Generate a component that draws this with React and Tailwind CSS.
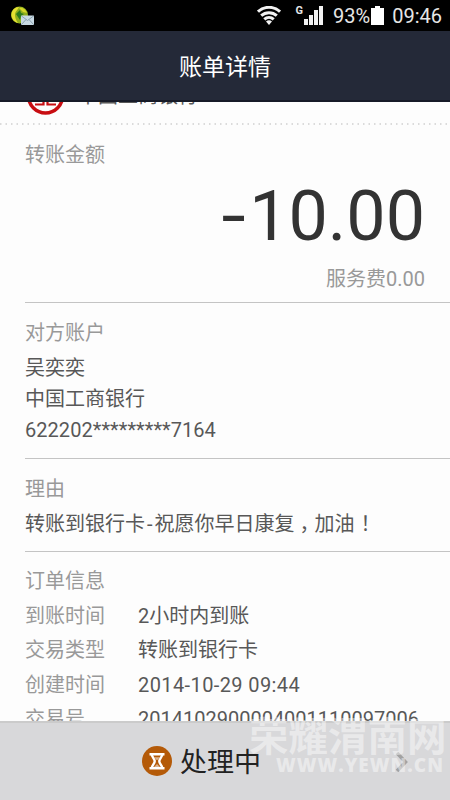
import { Fragment } from 'react';

const pedido = [
  { label: '到账时间', valor: '2小时内到账' },
  { label: '交易类型', valor: '转账到银行卡' },
  { label: '创建时间', valor: '2014-10-29 09:44', espacado: true },
  { label: '交易号', valor: '2014102900004001110097006' },
];

function StatusBar() {
  return (
    <div className="flex h-[31px] shrink-0 items-center bg-black text-[#e6e6e6]">
      {/* Notification: coin + envelope */}
      <svg className="ml-[10px]" width="25" height="22" viewBox="0 0 25 22">
        <circle cx="9.5" cy="10" r="8.5" fill="#8fae1c" />
        <path d="M1.500 9C2 5 5 2 9 2c-1 3-4 4-4 8 0 3 1 5 3 8-4-1-7-5-6.500-9z" fill="#e6e032" />
        <path d="M9 3c4-1 7 2 8 5l-4-1z" fill="#d6d628" />
        <path d="M6 9l4-4 1 3 3 1-3 2-1 4-2-3z" fill="#2c7a1e" />
        <rect x="11" y="10.500" width="13" height="9.500" rx="1" fill="#c8d9e3" />
        <path d="M11.500 11l6 4.500 6-4.500M11.500 19.500l4.500-5M23.500 19.500l-4.500-5" fill="none" stroke="#8ba2b0" strokeWidth="1" />
      </svg>

      {/* Wifi */}
      <svg className="ml-auto" width="24" height="19" viewBox="0 0 24 19" fill="none" stroke="#f2f2f2" strokeWidth="3">
        <path d="M1 5.700a16 16 0 0 1 22 0" />
        <path d="M4.200 9.700a11.500 11.500 0 0 1 15.600 0" />
        <path d="M7.300 13.300a7 7 0 0 1 9.400 0" />
        <path d="M9 15.600a4.500 4.500 0 0 1 6 0L12 19z" fill="#f2f2f2" stroke="none" />
      </svg>
      <span className="ml-[15px] mb-[10px] text-[11px] leading-none font-bold">G</span>
      <svg className="ml-px" width="20" height="19" viewBox="0 0 20 19" fill="#f2f2f2">
        <path d="M0 13h4v6H0zM5 9h4v10H5zM10 4h4v15h-4zM15 0h4v19h-4z" />
      </svg>
      <span className="ml-[9px] text-[20px] leading-none">93%</span>
      <svg className="ml-px" width="13" height="19" viewBox="0 0 13 19" fill="#fff">
        <path d="M4 0h5v2h4v17H0V2h4z" />
      </svg>
      <span className="ml-[8px] mr-[8px] text-[20px] leading-none">09:46</span>
    </div>
  );
}

function Divider() {
  return <div className="h-px shrink-0 bg-[#c4c4c4]" />;
}

export default function App() {
  return (
    <div className="flex h-[800px] w-[450px] flex-col overflow-hidden bg-[#fdfdfd] font-[Roboto,'Noto_Sans_CJK_SC',sans-serif] text-[20px] text-[#585858]">
      <StatusBar />

      <header className="flex h-[71px] shrink-0 items-center justify-center border-b-2 border-[#171b28] bg-[#242938] pt-[5px] text-[23px] text-white">
        账单详情
      </header>

      <main className="flex min-h-0 flex-1 flex-col overflow-hidden">
        {/* Bank row, scrolled under the header */}
        <div className="flex h-[21px] shrink-0 items-end overflow-hidden pl-[26px]">
          <svg className="mb-[8px] shrink-0" width="39" height="38" viewBox="0 0 39 38" fill="none" stroke="#c80d12">
            <circle cx="19.5" cy="19" r="17" strokeWidth="3.500" />
            <path d="M9 9h21M17.500 9v18.500H9M21.500 9v18.500H30M10.500 23.500h7M21.500 23.500h7" strokeWidth="2.200" />
          </svg>
          <span className="mb-[12px] ml-[13px] text-[20px] leading-[30px]">中国工商银行</span>
        </div>
        <svg className="shrink-0" width="450" height="3" viewBox="0 0 450 3">
          <path d="M0 1H450" stroke="#cfcfcf" strokeWidth="1.500" strokeDasharray="1.5 4" />
        </svg>

        <div className="flex flex-col pl-[25px]">
          <section className="flex h-[176px] shrink-0 flex-col pr-[25px]">
            <h2 className="mt-[14px] leading-[30px] text-[#999]">转账金额</h2>
            <div className="mt-[10px] text-right text-[70px] leading-[72px] text-[#333]">
              <span className="mr-[6px] inline-block scale-x-125">-</span>10.00
            </div>
            <div className="mt-[12px] text-right leading-[30px] text-[#999]">服务费0.00</div>
          </section>
          <Divider />

          <section className="h-[155px] shrink-0">
            <h2 className="pt-[15px] leading-[30px] text-[#999]">对方账户</h2>
            <p className="mt-[5px] leading-[31px]">吴奕奕</p>
            <p className="leading-[31px]">中国工商银行</p>
            <p className="leading-[31px] tracking-[0.05px]">622202*********7164</p>
          </section>
          <Divider />

          <section className="h-[92px] shrink-0">
            <h2 className="pt-[15px] leading-[30px] text-[#999]">理由</h2>
            <p className="mt-[5px] leading-[31px]">
              转账到银行卡<span className="mx-[2px]">-</span>祝愿你早日康复<span className="ml-[5px] mr-[-5px]">，</span>加油
              <span className="ml-[6px]">！</span>
            </p>
          </section>
          <Divider />

          <section className="shrink-0">
            <h2 className="pt-[14px] leading-[30px] text-[#999]">订单信息</h2>
            <dl className="mt-[3px] grid grid-cols-[113px_1fr] leading-[34.300px]">
              {pedido.map((item) => (
                <Fragment key={item.label}>
                  <dt className="text-[#999]">{item.label}</dt>
                  <dd className={item.espacado ? 'tracking-[0.4px]' : ''}>{item.valor}</dd>
                </Fragment>
              ))}
            </dl>
          </section>
        </div>
      </main>

      <footer className="relative flex h-[79px] shrink-0 items-center border-t-2 border-[#cbcbcb] bg-[#d8d8da] pl-[142px] text-[27px] text-[#222]">
        <svg className="mb-[2px]" width="30" height="30" viewBox="0 0 30 30">
          <circle cx="15" cy="15" r="15" fill="#b45a08" />
          <path d="M7.500 8.200h15M7.500 22.300h15" stroke="#fff" strokeWidth="2.400" />
          <path d="M9.700 8c0 3.500 3 4.500 3 7.250s-3 3.750-3 7M20.300 8c0 3.500-3 4.500-3 7.250s3 3.750 3 7" fill="none" stroke="#fff" strokeWidth="2.400" />
          <path d="M12 11.200h6l-3 3zM12 21l3-3 3 3z" fill="#fff" opacity=".55" />
        </svg>
        <span className="mt-[4px] ml-[8px]">处理中</span>
        <svg className="ml-auto mr-[41px]" width="14" height="20" viewBox="0 0 14 20" fill="none" stroke="#a2a2a2" strokeWidth="3.500">
          <path d="M2 1l8.500 9L2 19" />
        </svg>

        {/* Site watermark */}
        <div className="absolute top-[-6px] left-[249px] w-[200px] whitespace-nowrap text-white/45">
          <div className="text-[39.500px] leading-[42px] font-bold">荣耀渭南网</div>
          <div className="ml-[27px] font-['Open_Sans'] text-[19px] leading-[12px] font-extrabold tracking-[1px]">WWW.YEWN.CN</div>
        </div>
      </footer>
    </div>
  );
}
